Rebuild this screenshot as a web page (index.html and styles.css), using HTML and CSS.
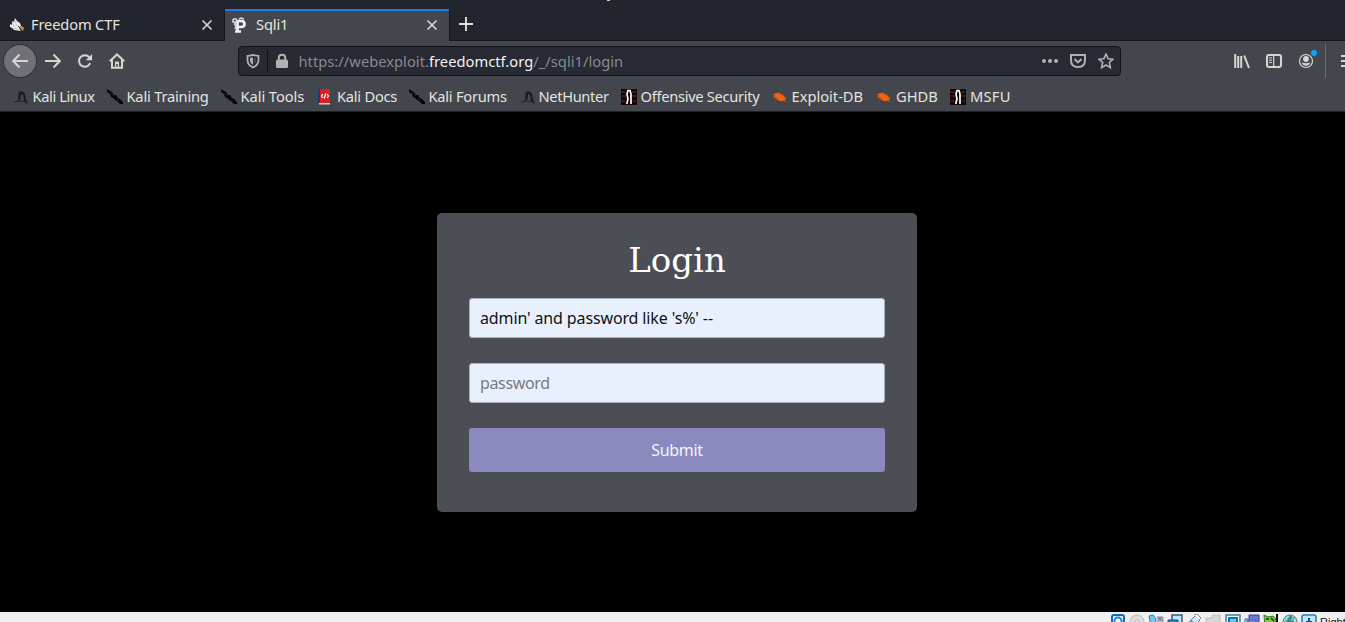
FILE: index.html
```html
<!DOCTYPE html>
<html lang="en">
<head>
<meta charset="utf-8">
<title>Sqli1</title>
<link rel="stylesheet" href="styles.css">
</head>
<body>
<svg class="defs" width="0" height="0">
  <symbol id="dragon" viewBox="0 0 16 16"><path d="M4 13Q6 11 5.5 7Q5.5 3 9 2.5Q12 3.5 12.5 7Q12 10.5 14.5 13L11 12Q11 7 9.5 5Q7.5 4.5 7.8 8Q7.5 12 4 13Z" fill="#17191c"/><path d="M1 13.5Q8 10.5 15 14.5M5 5L8 2" fill="none" stroke="#26282c" stroke-width="1.2"/></symbol>
  <symbol id="knife" viewBox="0 0 16 16"><path d="M0 0L3 2L5 3L7 6L9 6L11 9L13 10L16 13L16 15L13 15L10 12L8 11L6 9L4 8L3 5L0 3Z" fill="#050505"/><path d="M3 4L7 7M9 9L12 12" stroke="#3b3b3d" stroke-width=".5"/></symbol>
  <symbol id="offsec" viewBox="0 0 16 16"><path d="M0 0H16V16H0Z" fill="#180507"/><path d="M0 3H5M1 7H5M0 12H4M11 3H15M11 7H16M12 12H15" stroke="#49302f"/><path d="M5.8 15L7 10L6 5L7 1.5H9L10 5V15" fill="#080304" stroke="#fff" stroke-width="1.7"/></symbol>
  <symbol id="bug" viewBox="0 0 16 16"><path d="M2 5L5 4L9 5L12 7L14 10L12 12L8 12L5 10L2 8Z" fill="#f3640c"/><path d="M1 5L4 7M1 9L5 8M3 12L6 10M7 3L8 6M11 5L10 8M15 9L11 9M14 13L11 11" stroke="#c65016" stroke-width=".8"/></symbol>
</svg>

<header class="tabs">
  <div class="tab tab-idle">
    <svg class="favicon" viewBox="0 0 16 16"><path d="M1 7L3 8L3 4L5 5L6 1L8 4L11 6L12 9L10 11L12 14L5 13L3 11L1 10Z" fill="#eee"/><path d="M3 5L6 10M6 4L8 9M4 11L9 12" stroke="#aaa" stroke-width=".6"/><path d="M10 10L13 9L15 11L14 14L12 12Z" fill="#c89145"/><path d="M9 9L11 11" stroke="#222"/></svg>
    <span class="tab-name">Freedom CTF</span>
    <svg class="close" viewBox="0 0 12 12"><path d="M1.5 1.5L10.5 10.5M10.5 1.5L1.5 10.5"/></svg>
  </div>
  <div class="tab tab-active">
    <svg class="favicon" viewBox="0 0 16 16"><path d="M5.5 15V4M5 4H9Q12.5 4 12.5 7Q12.5 10 9 10H6M3 14.5H9" fill="none" stroke="#f1f1f1" stroke-width="2.7"/><path d="M1 2H4L5 4M7 2L9 1L12 2M1 2V5H4L2.5 7L4 9L3 12" fill="none" stroke="#ddd" stroke-width="1.5"/></svg>
    <span class="tab-name">Sqli1</span>
    <svg class="close" viewBox="0 0 12 12"><path d="M1.5 1.5L10.5 10.5M10.5 1.5L1.5 10.5"/></svg>
  </div>
  <svg class="plus" viewBox="0 0 16 16"><path d="M8 1V15M1 8H15"/></svg>
  <i class="speck"></i>
</header>

<nav class="toolbar">
  <div class="back"><svg class="nav-icon" viewBox="0 0 16 16"><path d="M16 8H1.5M7.5 1.5L1.2 8L7.5 14.5"/></svg></div>
  <svg class="nav-icon" viewBox="0 0 16 16"><path d="M0 8H14.5M8.5 1.5L14.8 8L8.5 14.5"/></svg>
  <svg class="nav-icon" viewBox="0 0 16 16"><path d="M13.2 10.2A5.8 5.8 0 1 1 12.3 4.2"/><path class="solid" d="M15 1V7.3H8.7Z"/></svg>
  <svg class="nav-icon" viewBox="0 0 16 16"><path d="M.8 8.3L8 1.5L15.2 8.3M3 7V14.8H13V7"/><path class="solid" d="M6 14V9.5Q6 8.5 7 8.5H9Q10 8.5 10 9.5V14H8.8V11H7.2V14Z"/></svg>
  <div class="address">
    <svg class="url-icon" viewBox="0 0 16 16"><path d="M8 1.8Q11 2.8 13.5 2.8V7Q13.5 12 8 14.5Q2.5 12 2.5 7V2.8Q5 2.8 8 1.8Z" stroke-width="1.8"/><path class="solid" d="M8 4.2L5 5V7.5Q5 10.3 8 12Z"/><path class="solid" d="M9.3 4.6L11 5V7.5Q11 9.6 9.3 11Z" opacity=".25"/></svg>
    <i class="address-split"></i>
    <svg class="url-icon lock" viewBox="0 0 16 16"><path d="M4.8 8V4.5Q4.8 1.8 8 1.8Q11.2 1.8 11.2 4.5V8"/><rect class="solid" x="2" y="6.5" width="12" height="8.5" rx="1.5"/></svg>
    <span class="url">https://webexploit.<b>freedomctf.org</b>/_/sqli1/login</span>
    <div class="url-actions">
      <svg class="url-icon" viewBox="0 0 16 16"><circle class="solid" cx="2" cy="8" r="2"/><circle class="solid" cx="8" cy="8" r="2"/><circle class="solid" cx="14" cy="8" r="2"/></svg>
      <svg class="url-icon" viewBox="0 0 16 16"><path d="M1 2H15V7Q15 14 8 14Q1 14 1 7ZM4.5 6L8 9.4L11.5 6"/></svg>
      <svg class="url-icon" viewBox="0 0 16 16"><path d="M8 1L10.1 5.7L15 6.2L11.3 9.5L12.4 14.6L8 12L3.6 14.6L4.7 9.5L1 6.2L5.9 5.7Z" stroke-width="1.6"/></svg>
    </div>
  </div>
  <div class="tools">
    <svg class="nav-icon" viewBox="0 0 16 16"><path d="M1.2 1V15M4.2 3V15M7.2 3V15M10.2 2.5L15 15"/></svg>
    <svg class="nav-icon" viewBox="0 0 16 16"><rect x="1" y="2" width="14" height="12" rx="2"/><path d="M7.7 2V14" stroke-width="1.2"/><path d="M3 5H6M3 7.3H6M3 9.6H6" stroke-width="1"/></svg>
    <div class="account"><svg class="nav-icon" viewBox="0 0 16 16"><circle cx="8" cy="8" r="6.5" stroke-width="1.2"/><circle class="solid" cx="8" cy="6" r="2.9"/><path class="solid" d="M3.7 9.6Q8 11 12.3 9.6Q11 12.8 8 12.8Q5 12.8 3.7 9.6Z"/></svg><i class="badge"></i></div>
    <i class="tool-split"></i>
    <svg class="nav-icon menu" viewBox="0 0 16 16"><path d="M1 3H15M1 8H15M1 13H15"/></svg>
  </div>
</nav>

<nav class="bookmarks">
  <a class="mark kali-linux"><svg><use href="#dragon"/></svg><span>Kali Linux</span></a>
  <a class="mark training"><svg><use href="#knife"/></svg><span>Kali Training</span></a>
  <a class="mark kali-tools"><svg><use href="#knife"/></svg><span>Kali Tools</span></a>
  <a class="mark docs"><svg viewBox="0 0 16 16"><path d="M1 0H12V14H1Z" fill="#e01b22"/><path d="M0 0H2V14H0Z" fill="#1c3e68"/><path d="M1 14H12V15.5H1Z" fill="#d9cfc9"/><path d="M5 5L3.5 7L5 9M9 5L10.5 7L9 9M7.7 4.5L6.3 9.5" fill="none" stroke="#fff" stroke-width="1.2"/></svg><span>Kali Docs</span></a>
  <a class="mark forums"><svg><use href="#knife"/></svg><span>Kali Forums</span></a>
  <a class="mark nethunter"><svg><use href="#dragon"/></svg><span>NetHunter</span></a>
  <a class="mark offensive"><svg><use href="#offsec"/></svg><span>Offensive Security</span></a>
  <a class="mark exploit"><svg><use href="#bug"/></svg><span>Exploit-DB</span></a>
  <a class="mark ghdb"><svg><use href="#bug"/></svg><span>GHDB</span></a>
  <a class="mark msfu"><svg><use href="#offsec"/></svg><span>MSFU</span></a>
</nav>

<main class="page">
  <form class="login">
    <h1>Login</h1>
    <input class="user" type="text" value="admin' and password like 's%' --">
    <input type="text" placeholder="password">
    <button type="button">Submit</button>
  </form>
</main>

<footer class="status">
  <svg viewBox="0 0 16 16"><rect x="2" y="1" width="12" height="14" rx="2" fill="#e8f5ff" stroke="#1669b5" stroke-width="2"/><circle cx="8" cy="7" r="3.5" fill="#fff" stroke="#2387d5" stroke-width="2"/></svg>
  <svg viewBox="0 0 16 16"><circle cx="8" cy="8" r="7" fill="#ddd" stroke="#bbb"/><circle cx="8" cy="8" r="2" fill="#f4f4f4" stroke="#bbb"/></svg>
  <svg viewBox="0 0 16 16"><path d="M1 2L5 1L8 5V12H3Z" fill="#71c6f3" stroke="#287cba"/><path d="M9 3H15V11H8" fill="#bac7cf" stroke="#8798a6"/><path d="M11 3V7M13 3V7" stroke="#657"/></svg>
  <svg viewBox="0 0 16 16"><path d="M5 1H15V9H5Z" fill="#b9e8ff" stroke="#3b5674" stroke-width="1.5"/><path d="M1 6H11V14H1Z" fill="#238bc9" stroke="#345"/></svg>
  <svg viewBox="0 0 16 16"><path d="M2 9L9 2L14 6L7 13Z" fill="#d2e8f6" stroke="#65798a"/><path d="M8 1L11 0L15 4L13 6" fill="#fff" stroke="#789"/><path d="M5 7L9 11" stroke="#2684c5" stroke-width="2"/></svg>
  <svg viewBox="0 0 16 16"><path d="M1 4H7L8 1H15V14H1Z" fill="#d7d7d7" stroke="#bbb"/></svg>
  <svg viewBox="0 0 16 16"><path d="M1 1H15V13H1Z" fill="#eefaff" stroke="#4d7899" stroke-width="1.5"/><path d="M4 4H12V11H4Z" fill="#65c9ef" stroke="#087bbb" stroke-width="2"/></svg>
  <svg viewBox="0 0 16 16"><path d="M5 1H15V10H5Z" fill="#6876d4" stroke="#324193"/><path d="M1 5H4V12H1ZM3 7H12V14H3Z" fill="#b6d3fa" stroke="#4057a8"/></svg>
  <svg viewBox="0 0 16 16"><path d="M1 1L5 3L10 2L13 5V14H2Z" fill="#78cc36" stroke="#32751e"/><path d="M3 5H6M8 4L11 7" stroke="#173a11" stroke-width="1.5"/><path d="M14 0V15" stroke="#111" stroke-width="2"/></svg>
  <svg viewBox="0 0 16 16"><circle cx="8" cy="8" r="7" fill="#9edcf4" stroke="#417398"/><path d="M2 8L8 2L13 4L7 11Z" fill="#67ba54"/><path d="M9 2L6 8H12" fill="none" stroke="#267fb2" stroke-width="2"/></svg>
  <svg viewBox="0 0 16 16"><rect x="1" y="1" width="14" height="14" rx="2" fill="#b9eaff" stroke="#267eb9" stroke-width="1.5"/><path d="M8 4V12M5 8H11" stroke="#174f85" stroke-width="2"/></svg>
  <span>Right</span>
</footer>
</body>
</html>
```

FILE: styles.css
```css
* { box-sizing: border-box; }
body { margin: 0; width: 1345px; height: 622px; overflow: hidden; background: #000; font-family: "Noto Sans", sans-serif; display: flex; flex-direction: column; }
svg { display: block; flex: none; }
.defs { position: absolute; }
.tabs { height: 41px; flex: none; position: relative; display: flex; padding-top: 9px; background: #23252e; border-bottom: 1px solid #15161b; color: #e4e4df; font-size: 14.67px; }
.tab { display: flex; align-items: center; height: 31px; }
.tab-idle { width: 224px; padding: 0 11px 0 9px; }
.tab-active { width: 226px; height: 32px; padding: 0 11px 1px 7px; background: #43464d; border-left: 1px solid #15161b; border-right: 1px solid #15161b; box-shadow: inset 0 2px #1e75f5; }
.favicon { width: 16px; height: 16px; }
.tab-name { flex: 1; margin-left: 6px; padding-bottom: 2px; line-height: 20px; letter-spacing: -.15px; }
.tab-active .tab-name { margin-left: 8px; }
.close { width: 12px; height: 12px; stroke: #d2d2ce; stroke-width: 1.7; }
.plus { width: 16px; height: 16px; margin: 7px 0 0 8px; stroke: #e0e0dc; stroke-width: 1.9; }
.speck { position: absolute; left: 607px; top: 0; width: 3px; height: 1px; background: #d9d59b; }
.toolbar { height: 40px; flex: none; display: flex; align-items: center; background: #43464d; padding-left: 4px; gap: 16px; }
.back { width: 32px; height: 32px; border-radius: 50%; background: #707176; box-shadow: 0 0 0 1px #303238; display: grid; place-items: center; margin-right: -7px; flex: none; }
.nav-icon, .url-icon { width: 16px; height: 16px; fill: none; stroke: #d6d6d1; stroke-width: 2; }
.nav-icon .solid { fill: #d6d6d1; stroke: none; }
.address { width: 883px; flex: none; height: 30px; margin-left: 97px; display: flex; align-items: center; padding: 0 6px; background: #272933; border: 1px solid #111217; border-radius: 4px; font-size: 14.67px; color: #878991; }
.url-icon { stroke: #b1b1b2; }
.url-icon .solid { fill: #b1b1b2; stroke: none; }
.address-split { width: 1px; height: 22px; background: #101116; margin: 0 6px; }
.url { margin-left: 8.5px; letter-spacing: .04px; white-space: nowrap; }
.url b { font-weight: 400; color: #f4f4f2; }
.url-actions { display: flex; gap: 12px; margin-left: auto; }
.tools { display: flex; align-items: center; gap: 16px; margin-left: 97px; flex: none; }
.account { position: relative; }
.badge { position: absolute; right: -3px; top: -3px; width: 6px; height: 6px; border-radius: 50%; background: #00a8f5; }
.tool-split { width: 1px; height: 34px; background: #686a6e; margin-left: -5px; }
.menu { margin-left: -2px; }
.bookmarks { height: 31px; flex: none; display: flex; padding-left: 13px; background: #43464d; border-bottom: 1px solid #202228; color: #e4e4df; font-size: 14.67px; }
.mark { display: flex; gap: 3.5px; height: 32px; align-items: center; white-space: nowrap; flex: none; }
.mark span { padding-bottom: 2px; }
.mark svg { width: 16px; height: 16px; }
.kali-linux { width: 94px; letter-spacing: -.4px; }
.training { width: 114px; letter-spacing: -.2px; }
.kali-tools { width: 96px; letter-spacing: -.06px; }
.docs { width: 92px; padding-left: 1px; gap: 3px; letter-spacing: -.24px; }
.forums { width: 111px; letter-spacing: -.25px; }
.nethunter { width: 101px; gap: 2.5px; letter-spacing: -.35px; }
.offensive { width: 151px; letter-spacing: -.29px; }
.exploit { width: 104px; }
.ghdb { width: 74px; gap: 4px; }
.msfu { gap: 4px; letter-spacing: .25px; }
.page { height: 500px; flex: none; display: flex; justify-content: center; align-items: flex-start; padding: 101px 0 0 9px; }
.login { width: 480px; height: 299px; border-radius: 5px; background: #4c4e56; padding: 27px 32px 0; display: flex; flex-direction: column; }
h1 { margin: 0 0 18px; font: 400 34px/40px "DejaVu Serif", serif; text-align: center; color: #fff; }
input { height: 40px; margin: 0 0 25px; padding: 0 10px; border: 1px solid #aab0bf; border-radius: 3px; background: #e8f0fe; color: #111; font: 16px "Noto Sans", sans-serif; letter-spacing: -.35px; }
.user { letter-spacing: -.13px; }
input::placeholder { color: #777b82; opacity: 1; }
button { height: 44px; border: 0; border-radius: 3px; background: #8a8abe; color: #f4f4fa; font: 16px "Noto Sans", sans-serif; letter-spacing: -.35px; }
.status { height: 10px; overflow: hidden; flex: none; background: #f0f0f0; display: flex; padding: 2px 0 0 1110px; gap: 3.1px; font: 11px/16px "Liberation Sans", sans-serif; color: #111; white-space: nowrap; }
.status svg { width: 16px; height: 16px; }
```
